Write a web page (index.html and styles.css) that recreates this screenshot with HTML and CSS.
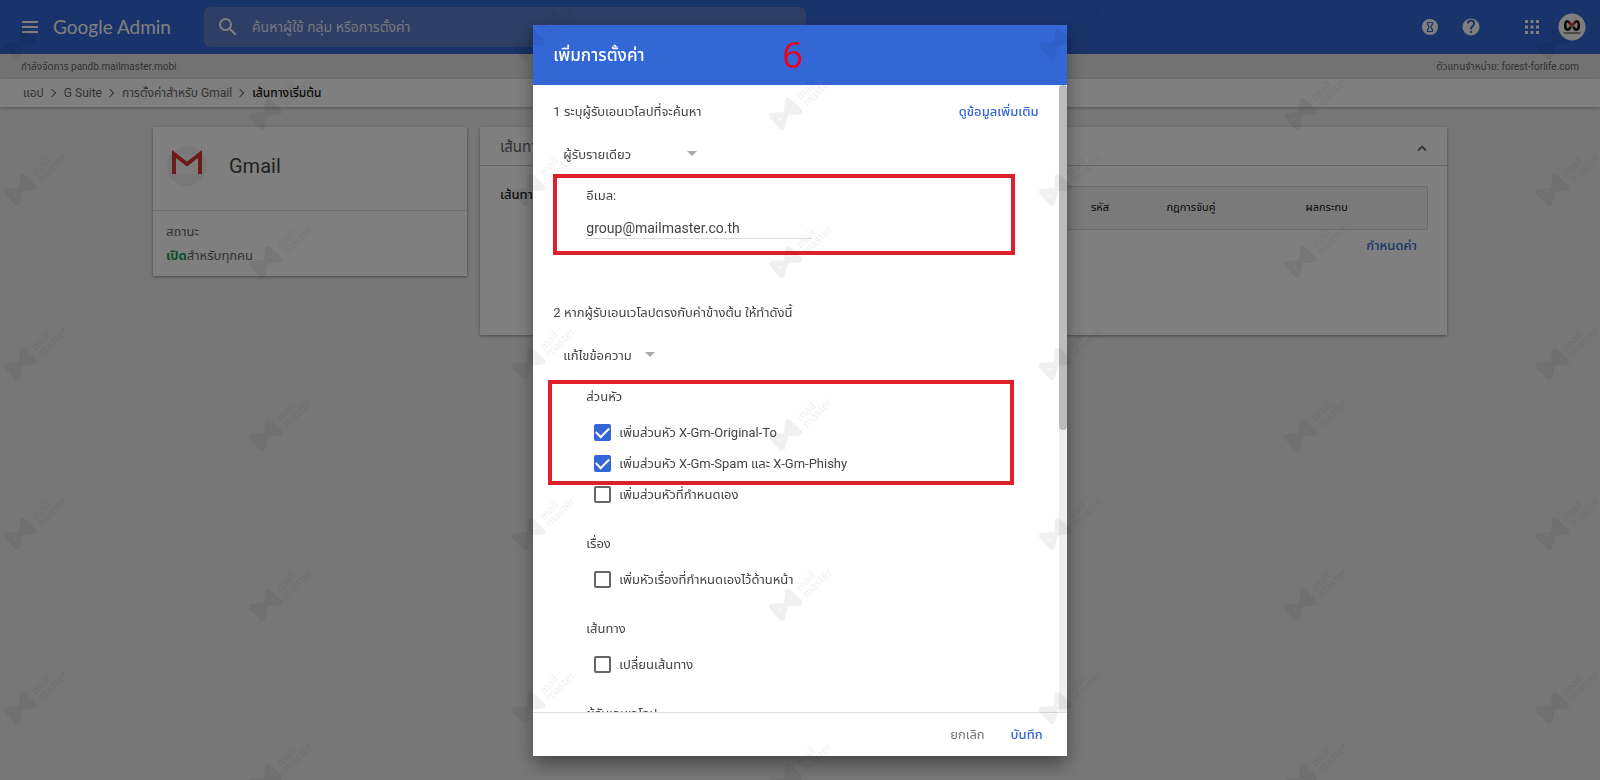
FILE: index.html
```html
<!DOCTYPE html>
<html lang="th">
<head>
<meta charset="utf-8">
<title>Google Admin</title>
<link rel="stylesheet" href="styles.css">
</head>
<body>
<div class="page">
  <header class="topbar">
    <button class="icon-btn menu-btn" type="button" aria-label="เมนู">
      <svg width="24" height="24" viewBox="0 0 24 24" fill="#fff"><path d="M4 6h16v2H4zM4 11h16v2H4zM4 16h16v2H4z"/></svg>
    </button>
    <div class="brand">Google Admin</div>
    <div class="search">
      <svg width="20" height="20" viewBox="2 2 20 20" fill="#fff"><path d="M15.5 14h-.79l-.28-.27A6.47 6.47 0 0 0 16 9.5 6.5 6.5 0 1 0 9.5 16c1.61 0 3.09-.59 4.23-1.57l.27.28v.79l5 4.99L20.49 19l-4.99-5zm-6 0a4.5 4.5 0 1 1 0-9 4.5 4.5 0 0 1 0 9z"/></svg>
      <input class="search-input" type="text" aria-label="ค้นหา" placeholder="ค้นหาผู้ใช้ กลุ่ม หรือการตั้งค่า">
    </div>
    <div class="top-icons">
      <button class="icon-btn" type="button" aria-label="งาน">
        <svg width="18" height="18" viewBox="0 0 18 18"><circle cx="9" cy="9" r="8" fill="#fff"/><path d="M6.500 4.500h5v1.500L9.800 9l1.700 3v1.500h-5V12L8.200 9 6.500 6z" fill="none" stroke="#3367d6" stroke-width="1.200"/></svg>
      </button>
      <button class="icon-btn help" type="button" aria-label="ความช่วยเหลือ">
        <svg width="20" height="20" viewBox="2 2 20 20" fill="#fff"><path d="M12 3.500a8.500 8.500 0 1 0 0 17 8.500 8.500 0 0 0 0-17zm1 14.500h-2v-2h2zm2-7-.9.900C13.400 12.600 13 13.200 13 14.600h-2v-.500c0-1.100.4-2.100 1.200-2.800l1.200-1.300A2 2 0 1 0 10 8.600H8a4 4 0 1 1 8 0c0 .900-.400 1.700-1 2.400z"/></svg>
      </button>
      <button class="icon-btn apps" type="button" aria-label="แอป">
        <svg width="14" height="14" viewBox="0 0 14 14" fill="#fff"><path d="M0 0h3v3H0zM5.500 0h3v3h-3zM11 0h3v3h-3zM0 5.500h3v3H0zM5.500 5.500h3v3h-3zM11 5.500h3v3h-3zM0 11h3v3H0zM5.500 11h3v3h-3zM11 11h3v3h-3z"/></svg>
      </button>
      <button class="icon-btn" type="button" aria-label="บัญชี">
        <svg width="28" height="28" viewBox="0 0 28 28"><circle cx="14" cy="14" r="13.500" fill="#fff"/><path d="M12 10.500C9.500 6.500 7.200 8.500 7.200 12s1 5 3 4.500 2-3 2-3M16 10.500c2.500-4 4.800-2 4.800 1.500s-1 5-3 4.500-2-3-2-3" fill="none" stroke="#111" stroke-width="2.600"/><path d="M10.500 7.500 14 10.500l3.500-3v3.500L14 14l-3.500-3z" fill="#c33"/><path d="M5.500 20h17" stroke="#777" stroke-width="1.500"/></svg>
      </button>
    </div>
  </header>
  <div class="domain-bar">
    <span>กำลังจัดการ pandb.mailmaster.mobi</span>
    <span>ตัวแทนจำหน่าย: forest-forlife.com</span>
  </div>
  <nav class="crumbs">
    <a href="#">แอป</a><span class="sep"></span><a href="#">G Suite</a><span class="sep"></span><a href="#">การตั้งค่าสำหรับ Gmail</a><span class="sep"></span><span class="current">เส้นทางเริ่มต้น</span>
  </nav>
  <main class="content">
    <section class="card app-card">
      <div class="app-head">
        <svg width="44" height="44" viewBox="0 0 44 44"><circle cx="22" cy="22" r="20" fill="#f1f1f1"/><path d="M10 10h24v20H10z" fill="#fafafa"/><path d="M9 30V10L22 20 35 10V30" fill="none" stroke="#d9382c" stroke-width="4"/></svg>
        <h1 class="app-name">Gmail</h1>
      </div>
      <div class="app-status">
        <div>สถานะ</div>
        <div><b class="on">เปิด</b>สำหรับทุกคน</div>
      </div>
    </section>
    <section class="card settings-card">
      <div class="settings-head">
        <h2 class="settings-title">เส้นทางเริ่มต้น</h2>
        <button class="icon-btn" type="button" aria-label="ยุบ">
          <svg width="12" height="12" viewBox="0 0 12 12"><path d="M2 9.500 6 5.500l4 4" fill="none" stroke="#666" stroke-width="1.800"/></svg>
        </button>
      </div>
      <div class="settings-body">
        <div class="settings-label">เส้นทางเริ่มต้น</div>
        <div class="settings-main">
          <table class="rules">
            <thead><tr><th>รหัส</th><th>กฎการจับคู่</th><th>ผลกระทบ</th></tr></thead>
          </table>
          <a class="configure" href="#">กำหนดค่า</a>
        </div>
      </div>
    </section>
  </main>
</div>

<div class="overlay">
  <div class="dialog" role="dialog" aria-labelledby="dlg-title">
    <div class="dialog-head">
      <h2 class="dialog-title" id="dlg-title">เพิ่มการตั้งค่า</h2>
      <span class="step-mark">6</span>
    </div>
    <div class="dialog-body">
      <div class="form">
        <div class="row-between">
          <span>1 ระบุผู้รับเอนเวโลปที่จะค้นหา</span>
          <a class="more" href="#">ดูข้อมูลเพิ่มเติม</a>
        </div>
        <div class="picker">
          <select class="select select-wide" aria-label="ผู้รับ"><option>ผู้รับรายเดียว</option></select>
          <svg class="caret" width="10" height="5" viewBox="0 0 10 5"><path d="M0 0h10L5 5z" fill="#aaa"/></svg>
        </div>
        <div class="frame frame-email">
          <label class="field-label" for="email">อีเมล:</label>
          <input class="email" id="email" type="text" value="group@mailmaster.co.th">
        </div>
        <div class="step-two">2 หากผู้รับเอนเวโลปตรงกับค่าข้างต้น ให้ทำดังนี้</div>
        <div class="picker">
          <select class="select" aria-label="การทำงาน"><option>แก้ไขข้อความ</option></select>
          <svg class="caret" width="10" height="5" viewBox="0 0 10 5"><path d="M0 0h10L5 5z" fill="#aaa"/></svg>
        </div>
        <div class="frame frame-headers">
          <div class="group-title">ส่วนหัว</div>
          <label class="check"><input type="checkbox" checked><span>เพิ่มส่วนหัว X-Gm-Original-To</span></label>
          <label class="check"><input type="checkbox" checked><span>เพิ่มส่วนหัว X-Gm-Spam และ X-Gm-Phishy</span></label>
        </div>
        <div class="group group-first">
          <label class="check"><input type="checkbox"><span>เพิ่มส่วนหัวที่กำหนดเอง</span></label>
        </div>
        <div class="group">
          <div class="group-title">เรื่อง</div>
          <label class="check"><input type="checkbox"><span>เพิ่มหัวเรื่องที่กำหนดเองไว้ด้านหน้า</span></label>
        </div>
        <div class="group">
          <div class="group-title">เส้นทาง</div>
          <label class="check"><input type="checkbox"><span>เปลี่ยนเส้นทาง</span></label>
        </div>
        <div class="group">
          <div class="group-title">ผู้รับเอนเวโลป</div>
        </div>
      </div>
      <div class="scroll-track"><div class="scroll-thumb"></div></div>
    </div>
    <div class="dialog-foot">
      <button class="text-btn" type="button">ยกเลิก</button>
      <button class="text-btn primary" type="button">บันทึก</button>
    </div>
  </div>
</div>

<svg class="watermarks" aria-hidden="true">
  <defs>
    <g id="mark">
      <path d="M20 4 31 14.500 19 15.500zM4 19 17 18 14 30z" fill="none" stroke="#000" stroke-width="6" stroke-linejoin="round"/>
      <g transform="translate(33 4) rotate(-45)">
        <text class="mark-text" x="0" y="0">mail</text>
        <text class="mark-text" x="0" y="9">master</text>
      </g>
    </g>
  </defs>
  <g opacity="0.060">
    <use href="#mark" x="3" y="27"/><use href="#mark" x="3" y="173"/><use href="#mark" x="3" y="347"/><use href="#mark" x="3" y="517"/><use href="#mark" x="3" y="691"/>
    <use href="#mark" x="511" y="27"/><use href="#mark" x="511" y="173"/><use href="#mark" x="511" y="347"/><use href="#mark" x="511" y="517"/><use href="#mark" x="511" y="691"/>
    <use href="#mark" x="1038" y="27"/><use href="#mark" x="1038" y="173"/><use href="#mark" x="1038" y="347"/><use href="#mark" x="1038" y="517"/><use href="#mark" x="1038" y="691"/>
    <use href="#mark" x="1535" y="27"/><use href="#mark" x="1535" y="173"/><use href="#mark" x="1535" y="347"/><use href="#mark" x="1535" y="517"/><use href="#mark" x="1535" y="691"/>
    <use href="#mark" x="248" y="97"/><use href="#mark" x="248" y="245"/><use href="#mark" x="248" y="418"/><use href="#mark" x="248" y="588"/><use href="#mark" x="248" y="763"/>
    <use href="#mark" x="768" y="97"/><use href="#mark" x="768" y="245"/><use href="#mark" x="768" y="418"/><use href="#mark" x="768" y="588"/><use href="#mark" x="768" y="763"/>
    <use href="#mark" x="1283" y="97"/><use href="#mark" x="1283" y="245"/><use href="#mark" x="1283" y="418"/><use href="#mark" x="1283" y="588"/><use href="#mark" x="1283" y="763"/>
  </g>
</svg>
</body>
</html>
```
FILE: styles.css
```css
* { box-sizing: border-box; }
html, body { height: 100%; }
body {
  margin: 0;
  overflow: hidden;
  background: #eee;
  color: #444;
  font: 13px/20px Roboto, "Noto Sans Thai", "Noto Sans", sans-serif;
}
a { color: inherit; text-decoration: none; }
h1, h2 { margin: 0; font-weight: 400; }
input, select, button { font: inherit; color: inherit; }

.icon-btn {
  display: flex;
  padding: 0;
  border: 0;
  background: none;
}

/* Top bar */
.topbar {
  display: flex;
  align-items: center;
  height: 54px;
  padding: 0 14px 0 18px;
  background: #3367d6;
  color: #fff;
}
.brand {
  width: 141px;
  margin-left: 11px;
  font: 19px/24px Lato, sans-serif;
}
.search {
  display: flex;
  align-items: center;
  width: 602px;
  height: 40px;
  margin-left: 10px;
  padding: 0 14px;
  gap: 14px;
  border-radius: 6px;
  background: #5c7cc9;
}
.search-input {
  flex: 1;
  padding: 0;
  border: 0;
  background: none;
  font-size: 14px;
}
.search-input::placeholder { color: #e8ecf8; opacity: 1; }
.top-icons {
  display: flex;
  align-items: center;
  gap: 19px;
  margin-left: auto;
}
.help { margin-left: 3px; }
.apps { margin-left: 25px; }

.domain-bar {
  display: flex;
  justify-content: space-between;
  padding: 3px 21px 2px;
  background: #e4e4e4;
  color: #666;
  font-size: 10px;
}
.crumbs {
  display: flex;
  align-items: center;
  padding: 4px 23px;
  background: #fff;
  box-shadow: 0 1px 3px rgba(0, 0, 0, .3);
  color: #666;
  font-size: 12px;
}
.sep {
  width: 6px;
  height: 6px;
  margin: 0 9px 0 5px;
  border: solid #666;
  border-width: 1px 1px 0 0;
  transform: rotate(45deg);
}
.current { color: #111; font-weight: 500; }

/* Cards */
.content {
  display: flex;
  align-items: flex-start;
  gap: 13px;
  padding: 20px 153px;
}
.card {
  background: #fff;
  box-shadow: 0 1px 3px rgba(0, 0, 0, .4);
}
.app-card { width: 314px; }
.app-head {
  display: flex;
  gap: 20px;
  padding: 17px 12px 22px;
  border-bottom: 1px solid #ddd;
}
.app-name { font-size: 20px; line-height: 44px; }
.app-status {
  padding: 9px 13px 8px;
  color: #666;
  line-height: 24px;
}
.on { color: #0f9d58; }
.settings-card { flex: 1; min-height: 208px; }
.settings-head {
  display: flex;
  align-items: center;
  justify-content: space-between;
  height: 39px;
  padding: 2px 19px 0 20px;
  border-bottom: 1px solid #ccc;
}
.settings-title { font-size: 15px; color: #666; }
.settings-body {
  display: flex;
  padding: 20px 19px 0 20px;
}
.settings-label { width: 200px; line-height: 18px; font-weight: 500; color: #222; }
.settings-main { flex: 1; }
.rules {
  width: 100%;
  height: 44px;
  border: 1px solid #d8d8d8;
  border-collapse: collapse;
  background: #f5f5f5;
  font-size: 11px;
  color: #111;
}
.rules th { padding: 0; font-weight: 400; text-align: left; }
.rules th:first-child { padding-left: 390px; }
.rules th:nth-child(2) { width: 139px; }
.rules th:nth-child(3) { width: 122px; }
.configure {
  display: block;
  margin: 6px 11px 0;
  color: #3367d6;
  font-weight: 500;
  text-align: right;
}

/* Dialog */
.overlay {
  position: fixed;
  inset: 0;
  display: flex;
  justify-content: center;
  padding: 25px 0 24px;
  background: rgba(0, 0, 0, .5);
}
.dialog {
  display: flex;
  flex-direction: column;
  width: 33.33%;
  background: #fff;
  box-shadow: 0 8px 16px rgba(0, 0, 0, .4);
}
.dialog-head {
  position: relative;
  display: flex;
  align-items: center;
  height: 60px;
  flex: none;
  padding: 0 20px;
  background: #3367d6;
  color: #fff;
}
.dialog-title { font-size: 17px; font-weight: 500; }
.step-mark {
  position: absolute;
  left: 249px;
  color: #f00018;
  font: 36px/40px "Open Sans", sans-serif;
}
.dialog-body {
  display: flex;
  flex: 1;
  min-height: 0;
}
.form {
  flex: 1;
  overflow: hidden;
  padding: 17px 20px 0;
}
.row-between { display: flex; justify-content: space-between; }
.more { color: #3367d6; font-weight: 500; }
.picker {
  display: flex;
  align-items: center;
  padding: 22px 10px 0;
}
.select {
  appearance: none;
  width: 82px;
  height: 22px;
  padding: 0;
  border: 0;
  background: none;
}
.select-wide { width: 124px; }
.caret { margin-bottom: 4px; }
.frame {
  border: 4px solid #e02028;
}
.frame-email {
  width: 462px;
  height: 81px;
  margin-top: 8px;
  padding: 8px 29px;
}
.field-label { display: block; }
.email {
  display: block;
  width: 226px;
  height: 22px;
  margin-top: 11px;
  padding: 0;
  border: 0;
  border-bottom: 1px solid #ddd;
  font-size: 14px;
}
.step-two { margin-top: 48px; }
.frame-headers {
  width: 466px;
  margin: 13px 0 0 -5px;
  padding: 3px 34px 2px;
}
.group { padding: 0 33px; margin-bottom: 24px; }
.group-first { margin-top: -6px; }
.group-title { margin-bottom: 10px; }
.check {
  display: flex;
  align-items: center;
  gap: 8px;
  height: 31px;
  padding-left: 8px;
}
.check input {
  appearance: none;
  display: grid;
  place-items: center;
  width: 17px;
  height: 17px;
  margin: 0;
  border: 2px solid #666;
  border-radius: 2px;
}
.check input:checked {
  border-color: #3367d6;
  background: #3367d6;
}
.check input:checked::before {
  content: "";
  width: 11px;
  height: 6px;
  margin-bottom: 4px;
  border: solid #fff;
  border-width: 0 0 2px 2px;
  transform: rotate(-45deg);
}
.scroll-track { width: 8px; background: #efefef; }
.scroll-thumb { height: 55%; border-radius: 4px; background: #bbb; }
.dialog-foot {
  display: flex;
  justify-content: flex-end;
  gap: 26px;
  height: 44px;
  padding: 0 24px;
  border-top: 1px solid #ddd;
}
.text-btn { padding: 0; border: 0; background: none; color: #777; }
.primary { color: #3367d6; font-weight: 500; }

.watermarks {
  position: fixed;
  inset: 0;
  width: 100%;
  height: 100%;
  pointer-events: none;
}
.mark-text { font: 12px Lato, sans-serif; }
```
